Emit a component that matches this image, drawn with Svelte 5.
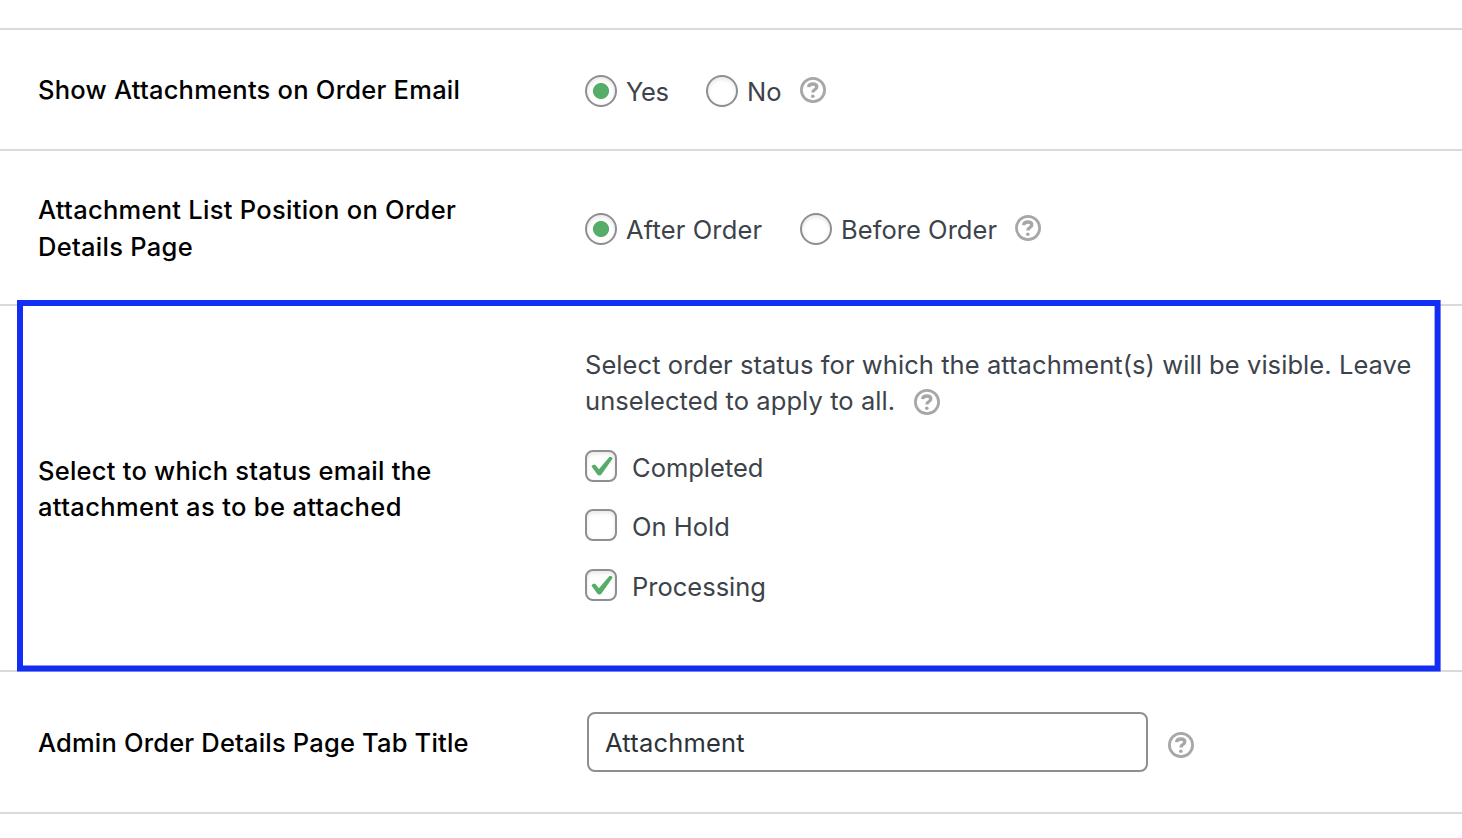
<script>
  let emailChoice = $state('Yes');
  let positionChoice = $state('After Order');
  let tabTitle = $state('Attachment');
  let statuses = $state([
    { name: 'Completed', checked: true },
    { name: 'On Hold', checked: false },
    { name: 'Processing', checked: true }
  ]);
</script>

{#snippet help()}
  <svg class="help" viewBox="0 0 26 26" width="26" height="26" role="img" aria-label="Help">
    <circle cx="13" cy="13" r="11.6" fill="none" stroke="#a7a7a7" stroke-width="2.8" />
    <path d="M8.6 10.1C8.8 7.9 10.5 7 12.9 7c2.5 0 3.9 1.2 3.9 3 0 1.3-.8 1.9-2 2.6-1.3.7-1.9 1.2-1.9 2.9" fill="none" stroke="#a7a7a7" stroke-width="3.3" />
    <circle cx="12.8" cy="19.2" r="1.8" fill="#a7a7a7" />
  </svg>
{/snippet}

<main>
  <section class="row email">
    <h2><span>Show Attachments on Order Email</span></h2>
    <div class="field">
      <label class="yes"><input type="radio" value="Yes" bind:group={emailChoice} /><span>Yes</span></label>
      <label class="no"><input type="radio" value="No" bind:group={emailChoice} /><span>No</span></label>
      {@render help()}
    </div>
  </section>

  <section class="row position">
    <h2><span>Attachment List Position on Order</span><br /><span>Details Page</span></h2>
    <div class="field">
      <label class="after"><input type="radio" value="After Order" bind:group={positionChoice} /><span>After Order</span></label>
      <label class="before"><input type="radio" value="Before Order" bind:group={positionChoice} /><span>Before Order</span></label>
      {@render help()}
    </div>
  </section>

  <section class="row status">
    <h2><span>Select to which status email the</span><br /><span class="wide">attachment as to be attached</span></h2>
    <div class="options">
      <p><span>Select order status for which the attachment(s) will be visible. Leave</span><br /><span>unselected to apply to all.</span>{@render help()}</p>
      {#each statuses as status}
        <label class="check"><input type="checkbox" bind:checked={status.checked} /><span>{status.name}</span></label>
      {/each}
    </div>
    <svg class="highlight" width="1424" height="372" aria-hidden="true">
      <rect x="3" y="3" width="1417.6" height="365.5" fill="none" stroke="#122ef5" stroke-width="6" />
    </svg>
  </section>

  <section class="row title">
    <h2><span>Admin Order Details Page Tab Title</span></h2>
    <div class="field">
      <input class="text" type="text" bind:value={tabTitle} aria-label="Tab title" />
      {@render help()}
    </div>
  </section>
</main>

<style>
  :global(body) {
    background: #fff;
  }
  main {
    box-sizing: border-box;
    width: 1462px;
    height: 838px;
    padding-top: 28px;
    overflow: hidden;
    font-family: Inter, sans-serif;
    font-size: 25.5px;
    line-height: 36.4px;
    color: #3c434a;
  }
  .row {
    position: relative;
    box-sizing: border-box;
    display: grid;
    grid-template-columns: 547px 1fr;
    align-items: center;
    padding-left: 38px;
    border-top: 2px solid #dadada;
  }
  .email { height: 121px; }
  .position { height: 155px; }
  .status { height: 366px; }
  .title { height: 144px; border-bottom: 2px solid #dadada; }
  h2 {
    margin: 0;
    padding-top: 2px;
    font-size: inherit;
    font-weight: 500;
    letter-spacing: 0.24px;
    color: #000;
  }
  .position h2 { letter-spacing: 0.28px; }
  .title h2 { letter-spacing: 0.18px; }
  .wide { letter-spacing: 0.35px; }
  .field {
    display: flex;
    align-items: center;
  }
  .field label {
    display: flex;
    align-items: center;
    gap: 9px;
    height: 32px;
    padding-top: 3px;
    white-space: nowrap;
  }
  .field label span {
    padding-top: 2px;
  }
  .yes { width: 121px; letter-spacing: -0.3px; }
  .no { width: 94px; }
  .after { width: 215px; letter-spacing: 0.14px; }
  .before { width: 215px; letter-spacing: 0.05px; }
  input {
    appearance: none;
    box-sizing: border-box;
    flex: none;
    margin: 0;
    border: 2px solid #8c8f94;
    background: #fff;
  }
  input[type='radio'],
  input[type='checkbox'] {
    width: 32px;
    height: 32px;
    box-shadow: inset 0 2px 4px rgba(0, 0, 0, 0.1);
  }
  input[type='radio'] {
    border-radius: 50%;
  }
  input[type='radio']:checked {
    background: radial-gradient(circle, #55ad68 7.6px, transparent 8.4px);
  }
  input[type='checkbox'] {
    border-radius: 8px;
  }
  input[type='checkbox']:checked {
    background: url("data:image/svg+xml,%3Csvg xmlns='http://www.w3.org/2000/svg' viewBox='0 0 32 32'%3E%3Cpath d='M6.5 16.4c.8-1.5 2.4-2.1 4-1.4l3.4 4.2L24.4 7.1c1.3-.6 2.8.1 3.3 1.3L16.5 24.6c-.8 1.3-3.3 1.3-4.2 0z' fill='%2355ad68'/%3E%3C/svg%3E") center / 32px 32px no-repeat;
  }
  .help {
    display: block;
    flex: none;
  }
  .title .help {
    margin-top: 5px;
  }
  .options {
    padding-bottom: 1px;
  }
  p {
    margin: 0 0 31px;
    line-height: 36px;
    letter-spacing: 0.07px;
    white-space: nowrap;
  }
  p .help {
    display: inline-block;
    margin-left: 19px;
    vertical-align: -5px;
  }
  .check {
    display: flex;
    align-items: center;
    gap: 15px;
    height: 32px;
    margin-bottom: 27.5px;
  }
  .check span {
    padding-top: 4.6px;
  }
  .highlight {
    position: absolute;
    z-index: 1;
    left: 17px;
    top: -6px;
    pointer-events: none;
  }
  .status {
    z-index: 1;
  }
  .text {
    width: 561px;
    height: 60px;
    margin: 0 20px 0 2px;
    padding: 0 16px;
    border-radius: 8px;
    font: inherit;
    letter-spacing: 0.2px;
    color: #2c3338;
  }
</style>
